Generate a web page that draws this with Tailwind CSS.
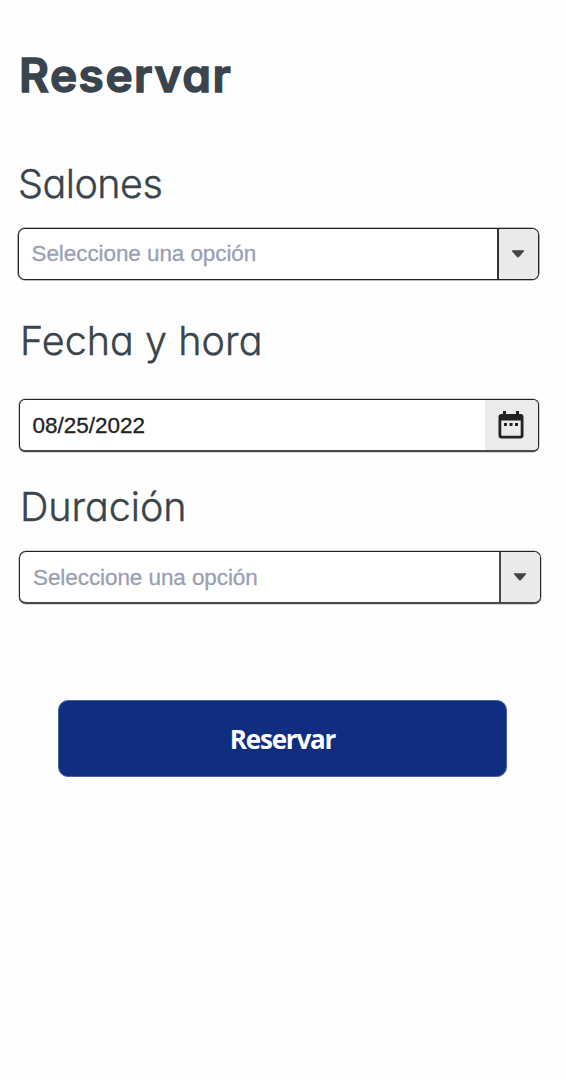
<!DOCTYPE html>
<html lang="es">
<head>
<meta charset="utf-8">
<meta name="viewport" content="width=device-width, initial-scale=1">
<title>Reservar</title>
<script src="https://cdn.jsdelivr.net/npm/@tailwindcss/browser@4"></script>
</head>
<body class="bg-[#fefefe]">
<main class="flex h-[1080px] w-[566px] flex-col overflow-hidden pt-[45px] text-[#39444c] whitespace-nowrap">
  <h1 class="ml-[19px] h-[60px] font-['Inter',sans-serif] text-[46px] leading-[61px] font-semibold tracking-[1.5px] [font-feature-settings:'cv11'] [-webkit-text-stroke:1.4px_#39444c] [stroke-linejoin:round]">Reservar</h1>

  <label class="mt-[53px] ml-[18px] h-[52px] font-['Inter',sans-serif] text-[39.5px] leading-[52px] font-light tracking-[-0.5px] [font-feature-settings:'cv11'] [-webkit-text-stroke:0.4px_#39444c]">Salones</label>
  <div class="mt-[18px] ml-[18px] flex h-[52px] w-[521px] overflow-hidden rounded-[7px] border border-[#222] bg-white shadow-[0_0_0_0.6px_#2229]">
    <div class="flex-1 pl-[12.5px] font-['Liberation_Sans',Arial,sans-serif] text-[22.5px] leading-[49px] tracking-[-0.08px] text-[#9aa0b3] [-webkit-text-stroke:0.3px_#9aa0b3]">Seleccione una opción</div>
    <div class="flex w-[41px] items-center justify-center border-l-2 border-[#333] bg-[#eaeaea] pr-[2px]">
      <svg class="h-[8px] w-[14px]" viewBox="0 0 14 8"><path d="M1.200.8h11.600L8 6.600q-1 .9-2 0z" fill="#444" stroke="#444" stroke-width="1" stroke-linejoin="round"/></svg>
    </div>
  </div>

  <label class="mt-[35px] ml-[20px] h-[52px] font-['Inter',sans-serif] text-[39.500px] leading-[52px] font-light tracking-[0.05px] [font-feature-settings:'cv11'] [-webkit-text-stroke:0.4px_#39444c]">Fecha y hora</label>
  <div class="mt-[32px] ml-[19px] flex h-[53px] w-[520px] overflow-hidden rounded-[6px] border border-b-2 border-[#222] border-b-[#4a4a4a] bg-white shadow-[0_0_0_0.5px_#2226]">
    <div class="flex-1 pl-[12.5px] font-['Liberation_Sans',Arial,sans-serif] text-[22.5px] leading-[52px] tracking-[0px] text-[#222] [-webkit-text-stroke:0.3px_#222]">08/25/2022</div>
    <div class="flex w-[53px] items-center justify-center bg-[#ebebeb] pr-[2px]">
      <svg class="h-[28px] w-[26px]" viewBox="0 0 26 28"><path d="M3.5 3H5V0h3v3h10V0h3v3h1.500a3 3 0 0 1 3 3v18.500a3 3 0 0 1-3 3h-19a3 3 0 0 1-3-3V6a3 3 0 0 1 3-3zM3.300 9.500V24q0 .8.8.8h17.800q.8 0 .8-.8V9.500z" fill="#222" fill-rule="evenodd"/><path d="M6 12h3v3H6zM11.500 12h3v3h-3zM17 12h3v3h-3z" fill="#222"/></svg>
    </div>
  </div>

  <label class="mt-[29px] ml-[20px] h-[52px] font-['Inter',sans-serif] text-[39.500px] leading-[52px] font-light tracking-[-0.05px] [font-feature-settings:'cv11'] [-webkit-text-stroke:0.4px_#39444c]">Duración</label>
  <div class="mt-[18px] ml-[19px] flex h-[53px] w-[522px] overflow-hidden rounded-[7px] border border-b-2 border-[#222] border-b-[#4a4a4a] bg-white shadow-[0_0_0_0.5px_#2226]">
    <div class="flex-1 pl-[13px] font-['Liberation_Sans',Arial,sans-serif] text-[22.5px] leading-[51px] tracking-[-0.08px] text-[#9aa0b3] [-webkit-text-stroke:0.3px_#9aa0b3]">Seleccione una opción</div>
    <div class="flex w-[41px] items-center justify-center border-l-2 border-[#4a4a4a] bg-[#eaeaea] pr-[2px]">
      <svg class="h-[8px] w-[14px]" viewBox="0 0 14 8"><path d="M1.200.8h11.600L8 6.600q-1 .9-2 0z" fill="#444" stroke="#444" stroke-width="1" stroke-linejoin="round"/></svg>
    </div>
  </div>

  <button class="mt-[96px] ml-[58px] h-[77px] w-[449px] rounded-[10px] border border-[#4a62a0] bg-[#102e80] pt-[2px] font-['Open_Sans','Noto_Sans',sans-serif] text-[26px] font-bold tracking-[-1.2px] text-white">Reservar</button>
</main>
</body>
</html>
